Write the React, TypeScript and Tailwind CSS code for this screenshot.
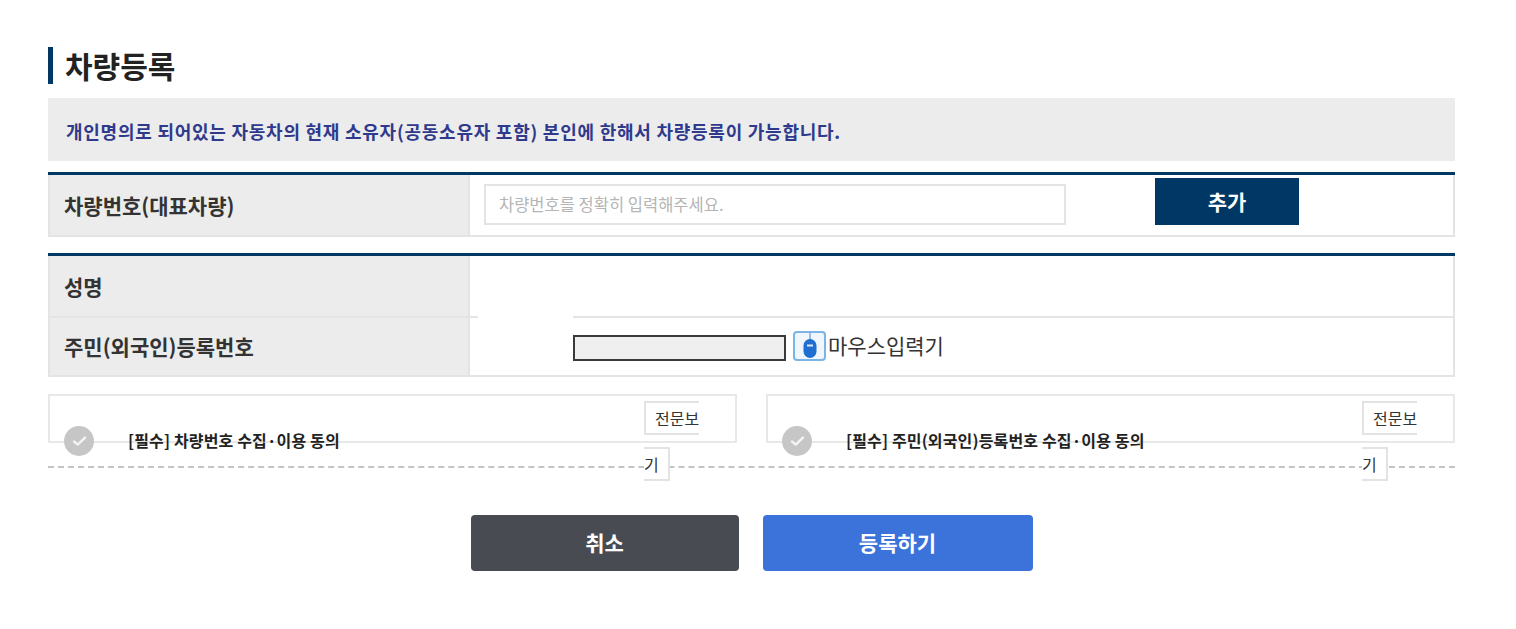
const font = "font-['Noto_Sans_CJK_KR','Noto_Sans',sans-serif]";

function Check() {
  return (
    <span className="absolute left-[14px] top-[30px] flex h-[30px] w-[30px] items-center justify-center rounded-full bg-[#c6c6c6]">
      <svg width="15" height="12" viewBox="0 0 15 12" fill="none">
        <path d="M2 6.5 L5.7 9.6 L13 2.6" stroke="#f4f4f4" strokeWidth="2.4" strokeLinecap="round" strokeLinejoin="round" />
      </svg>
    </span>
  );
}

function Agree({ label }: { label: string }) {
  return (
    <div className="relative h-[49px] w-[689px] border-2 border-[#e8e8e8]">
      <Check />
      <span className="absolute left-[78px] top-[34px] whitespace-nowrap text-[16px] leading-[20px] font-bold tracking-[0.15px] text-[#222]">{label}</span>
      <div className="absolute left-[594px] top-[-1px] w-[56px] text-[16px] leading-[46px] text-[#333]">
        <span className="border-2 border-[#e3e3e3] bg-white px-[9px] py-[3px]">전문보기</span>
      </div>
    </div>
  );
}

function MouseIcon() {
  return (
    <span className="ml-[7px] flex h-[30px] w-[33px] items-center justify-center rounded-[4px] border-2 border-[#7db4e6] bg-[#f0f6fc]">
      <svg width="14" height="26" viewBox="0 0 14 26" fill="none">
        <path d="M7 0 V7" stroke="#5a9bd8" strokeWidth="1.2" />
        <rect x="0.5" y="6" width="13" height="19" rx="6.5" fill="#1f6fd0" />
        <rect x="4" y="11.5" width="6" height="2" fill="#dcebfa" />
      </svg>
    </span>
  );
}

export default function App() {
  return (
    <div className={`${font} min-h-[629px] w-[1516px] bg-white pl-[48px] pt-[47px]`}>
      <div className="w-[1407px]">
        <h1 className="flex h-[37px] items-center border-l-[5px] border-[#003764] pl-[12px] text-[30px] leading-[37px] font-bold text-[#222]">차량등록</h1>

        <div className="mt-[14px] flex h-[63px] items-center bg-[#ececec] pl-[18px] pt-[3px] text-[18px] font-bold tracking-[0.75px] text-[#2f3a8c]">
          개인명의로 되어있는 자동차의 현재 소유자(공동소유자 포함) 본인에 한해서 차량등록이 가능합니다.
        </div>

        <div className="mt-[11px] border-t-[3px] border-[#003764]">
          <div className="flex h-[62px] border-b-2 border-x-2 border-[#e4e4e4]">
            <div className="flex w-[420px] items-center border-r-2 border-[#e4e4e4] bg-[#ececec] pl-[14px] pt-[2px] text-[21px] font-bold text-[#333]">차량번호(대표차량)</div>
            <div className="relative flex-1">
              <div className="ml-[14px] mt-[9px] flex h-[41px] w-[582px] items-center border-2 border-[#e4e4e4] pl-[13px] text-[16.5px] text-[#b5b5b5]">차량번호를 정확히 입력해주세요.</div>
              <button className="absolute left-[685px] top-[3px] h-[47px] w-[144px] bg-[#003764] text-[21px] font-bold text-white">추가</button>
            </div>
          </div>
        </div>

        <div className="mt-[16px] border-t-[3px] border-[#003764]">
          <div className="flex h-[62px] border-x-2 border-b-2 border-[#e4e4e4]">
            <div className="flex w-[420px] items-center border-r-2 border-[#e4e4e4] bg-[#ececec] pl-[14px] pt-[2px] text-[21px] font-bold text-[#333]">성명</div>
            <div className="flex-1" />
          </div>
          <div className="flex h-[59px] border-x-2 border-b-2 border-[#e4e4e4]">
            <div className="flex w-[420px] items-center border-r-2 border-[#e4e4e4] bg-[#ececec] pl-[14px] text-[21px] font-bold text-[#333]">주민(외국인)등록번호</div>
            <div className="flex flex-1 items-center">
              <div className="ml-[8px] -mt-[2px] h-[2px] w-[95px] self-start bg-white" />
              <div className="mt-[3px] h-[26px] w-[213px] border-2 border-[#3a3a3a] bg-[#efefef]" />
              <div className="-mt-[1px]"><MouseIcon /></div>
              <span className="ml-[2px] -mt-[4px] text-[21px] leading-[28px] text-[#333]">마우스입력기</span>
            </div>
          </div>
        </div>

        <div className="mt-[17px] flex h-[74px] justify-between border-b-2 border-dashed border-[#c4c4c4]">
          <Agree label="[필수] 차량번호 수집·이용 동의" />
          <Agree label="[필수] 주민(외국인)등록번호 수집·이용 동의" />
        </div>

        <div className="mt-[47px] flex justify-center gap-[24px]">
          <button className="h-[56px] w-[268px] rounded-[4px] bg-[#484c52] text-[21px] font-bold text-white">취소</button>
          <button className="h-[56px] w-[270px] rounded-[4px] bg-[#3b73db] text-[21px] font-bold text-white">등록하기</button>
        </div>
      </div>
    </div>
  );
}
